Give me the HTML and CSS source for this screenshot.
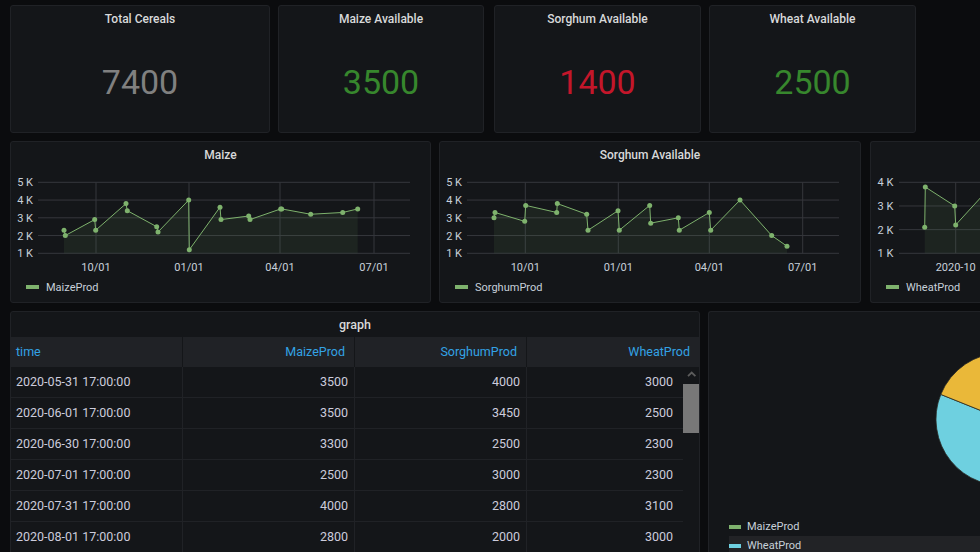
FILE: index.html
```html
<!DOCTYPE html>
<html>
<head>
<meta charset="utf-8">
<link rel="stylesheet" href="styles.css">
</head>
<body>
<div class="dash">
  <div class="row row-stats">
    <div class="panel stat w-total">
      <div class="panel-title">Total Cereals</div>
      <div class="stat-value c-gray">7400</div>
    </div>
    <div class="panel stat w-206">
      <div class="panel-title">Maize Available</div>
      <div class="stat-value c-green">3500</div>
    </div>
    <div class="panel stat w-207 extra-gap">
      <div class="panel-title">Sorghum Available</div>
      <div class="stat-value c-red">1400</div>
    </div>
    <div class="panel stat w-207">
      <div class="panel-title">Wheat Available</div>
      <div class="stat-value c-green">2500</div>
    </div>
  </div>

  <div class="row row-graphs">
    <div class="panel graph w-421">
      <div class="panel-title">Maize</div>
      <svg class="plot" width="419" height="100" viewBox="1 34 419 100">
        <path class="grid" d="M28 41.3H400M28 59.05H400M28 76.8H400M28 94.55H400M28 112.3H400M86 41.3V112.3M179 41.3V112.3M270 41.3V112.3M364 41.3V112.3"/>
        <g class="ylab">
          <text x="23" y="45.3">5 K</text>
          <text x="23" y="63">4 K</text>
          <text x="23" y="80.8">3 K</text>
          <text x="23" y="98.5">2 K</text>
          <text x="23" y="116.3">1 K</text>
        </g>
        <g class="xlab">
          <text x="86" y="130">10/01</text>
          <text x="179" y="130">01/01</text>
          <text x="270" y="130">04/01</text>
          <text x="364" y="130">07/01</text>
        </g>
        <polygon class="area" points="54,89.23 55.3,94.55 84.7,78.58 85.7,89.23 116,62.6 117.3,69.7 146.7,85.68 148,91 178.7,59.05 179.3,108.75 210,66.15 211,78.58 238.7,75.03 240,78.58 270.7,67.93 271.7,67.93 300.7,73.25 332.7,71.48 347.7,67.93 347.7,112.3 54,112.3"/>
        <polyline class="line" points="54,89.23 55.3,94.55 84.7,78.58 85.7,89.23 116,62.6 117.3,69.7 146.7,85.68 148,91 178.7,59.05 179.3,108.75 210,66.15 211,78.58 238.7,75.03 240,78.58 270.7,67.93 271.7,67.93 300.7,73.25 332.7,71.48 347.7,67.93"/>
        <g class="dots">
          <circle cx="54" cy="89.23" r="2.5"/><circle cx="55.3" cy="94.55" r="2.5"/>
          <circle cx="84.7" cy="78.58" r="2.5"/><circle cx="85.7" cy="89.23" r="2.5"/>
          <circle cx="116" cy="62.6" r="2.5"/><circle cx="117.3" cy="69.7" r="2.5"/>
          <circle cx="146.7" cy="85.68" r="2.5"/><circle cx="148" cy="91" r="2.5"/>
          <circle cx="178.7" cy="59.05" r="2.5"/><circle cx="179.3" cy="108.75" r="2.5"/>
          <circle cx="210" cy="66.15" r="2.5"/><circle cx="211" cy="78.58" r="2.5"/>
          <circle cx="238.7" cy="75.03" r="2.5"/><circle cx="240" cy="78.58" r="2.5"/>
          <circle cx="270.7" cy="67.93" r="2.5"/><circle cx="271.7" cy="67.93" r="2.5"/>
          <circle cx="300.7" cy="73.25" r="2.5"/><circle cx="332.7" cy="71.48" r="2.5"/>
          <circle cx="347.7" cy="67.93" r="2.5"/>
        </g>
      </svg>
      <div class="legend"><span class="swatch s-green"></span>MaizeProd</div>
    </div>

    <div class="panel graph w-422">
      <div class="panel-title">Sorghum Available</div>
      <svg class="plot" width="420" height="100" viewBox="1 34 420 100">
        <path class="grid" d="M28 41.3H400M28 59.05H400M28 76.8H400M28 94.55H400M28 112.3H400M86.3 41.3V112.3M179.3 41.3V112.3M270.3 41.3V112.3M363.7 41.3V112.3"/>
        <g class="ylab">
          <text x="23" y="45.3">5 K</text>
          <text x="23" y="63">4 K</text>
          <text x="23" y="80.8">3 K</text>
          <text x="23" y="98.5">2 K</text>
          <text x="23" y="116.3">1 K</text>
        </g>
        <g class="xlab">
          <text x="86.3" y="130">10/01</text>
          <text x="179.3" y="130">01/01</text>
          <text x="270.3" y="130">04/01</text>
          <text x="363.7" y="130">07/01</text>
        </g>
        <polygon class="area" points="55,76.8 56,71.48 85.7,80.35 86.7,64.38 117.7,71.48 118.3,62.6 147.7,73.25 149,89.23 179,69.7 180.3,89.23 210.7,64.38 211.7,82.13 239.3,76.8 240.3,89.23 270.3,71.48 271.7,89.23 301,59.05 332.7,94.55 348,105.2 348,112.3 55,112.3"/>
        <polyline class="line" points="55,76.8 56,71.48 85.7,80.35 86.7,64.38 117.7,71.48 118.3,62.6 147.7,73.25 149,89.23 179,69.7 180.3,89.23 210.7,64.38 211.7,82.13 239.3,76.8 240.3,89.23 270.3,71.48 271.7,89.23 301,59.05 332.7,94.55 348,105.2"/>
        <g class="dots">
          <circle cx="55" cy="76.8" r="2.5"/><circle cx="56" cy="71.48" r="2.5"/>
          <circle cx="85.7" cy="80.35" r="2.5"/><circle cx="86.7" cy="64.38" r="2.5"/>
          <circle cx="117.7" cy="71.48" r="2.5"/><circle cx="118.3" cy="62.6" r="2.5"/>
          <circle cx="147.7" cy="73.25" r="2.5"/><circle cx="149" cy="89.23" r="2.5"/>
          <circle cx="179" cy="69.7" r="2.5"/><circle cx="180.3" cy="89.23" r="2.5"/>
          <circle cx="210.7" cy="64.38" r="2.5"/><circle cx="211.7" cy="82.13" r="2.5"/>
          <circle cx="239.3" cy="76.8" r="2.5"/><circle cx="240.3" cy="89.23" r="2.5"/>
          <circle cx="270.3" cy="71.48" r="2.5"/><circle cx="271.7" cy="89.23" r="2.5"/>
          <circle cx="301" cy="59.05" r="2.5"/><circle cx="332.7" cy="94.55" r="2.5"/>
          <circle cx="348" cy="105.2" r="2.5"/>
        </g>
      </svg>
      <div class="legend"><span class="swatch s-green"></span>SorghumProd</div>
    </div>

    <div class="panel graph w-110 extra-gap1">
      <div class="panel-title"></div>
      <svg class="plot" width="110" height="100" viewBox="1 34 110 100">
        <path class="grid" d="M29 41.3H111M29 64.97H111M29 88.63H111M29 112.3H111M85.7 41.3V112.3"/>
        <g class="ylab">
          <text x="23.3" y="45.3">4 K</text>
          <text x="23.3" y="69">3 K</text>
          <text x="23.3" y="92.6">2 K</text>
          <text x="23.3" y="116.3">1 K</text>
        </g>
        <g class="xlab">
          <text x="85.7" y="130">2020-10</text>
        </g>
        <polygon class="area" points="54.7,86.26 55.3,46.02 84.7,64.97 85.7,83.9 116,50.76 116,112.3 54.7,112.3"/>
        <polyline class="line" points="54.7,86.26 55.3,46.02 84.7,64.97 85.7,83.9 116,50.76"/>
        <g class="dots">
          <circle cx="54.7" cy="86.26" r="2.5"/><circle cx="55.3" cy="46.02" r="2.5"/>
          <circle cx="84.7" cy="64.97" r="2.5"/><circle cx="85.7" cy="83.9" r="2.5"/>
        </g>
      </svg>
      <div class="legend"><span class="swatch s-green"></span>WheatProd</div>
    </div>
  </div>

  <div class="row row-bottom">
    <div class="panel table-panel w-690">
      <div class="table-title">graph</div>
      <div class="thead">
        <div class="th th-left">time</div>
        <div class="th">MaizeProd</div>
        <div class="th">SorghumProd</div>
        <div class="th th-last">WheatProd</div>
      </div>
      <div class="tbody">
        <div class="rows">
          <div class="tr"><div class="td td-left">2020-05-31 17:00:00</div><div class="td">3500</div><div class="td">4000</div><div class="td td-last">3000</div></div>
          <div class="tr"><div class="td td-left">2020-06-01 17:00:00</div><div class="td">3500</div><div class="td">3450</div><div class="td td-last">2500</div></div>
          <div class="tr"><div class="td td-left">2020-06-30 17:00:00</div><div class="td">3300</div><div class="td">2500</div><div class="td td-last">2300</div></div>
          <div class="tr"><div class="td td-left">2020-07-01 17:00:00</div><div class="td">2500</div><div class="td">3000</div><div class="td td-last">2300</div></div>
          <div class="tr"><div class="td td-left">2020-07-31 17:00:00</div><div class="td">4000</div><div class="td">2800</div><div class="td td-last">3100</div></div>
          <div class="tr"><div class="td td-left">2020-08-01 17:00:00</div><div class="td">2800</div><div class="td">2000</div><div class="td td-last">3000</div></div>
        </div>
        <div class="scrollbar">
          <svg class="chev" width="17" height="14" viewBox="0 0 17 14"><path d="M5 9.2L8.7 5.6L12.4 9.2"/></svg>
          <div class="thumb"></div>
        </div>
      </div>
    </div>

    <div class="panel pie-panel w-272">
      <svg class="pie" width="271" height="205" viewBox="0 0 271 205">
        <path fill="#7eb26d" d="M293.4 107.2L293.4 40.8A66.4 66.4 0 0 1 304.62 172.64Z"/>
        <path fill="#6ed0e0" d="M293.4 107.2L304.62 172.64A66.4 66.4 0 0 1 231.79 82.43Z"/>
        <path fill="#eab839" d="M293.4 107.2L231.79 82.43A66.4 66.4 0 0 1 293.4 40.8Z"/>
      </svg>
      <div class="pie-legend">
        <div class="pl-item"><span class="pl-swatch s-green"></span>MaizeProd</div>
        <div class="pl-item pl-hover"><span class="pl-swatch s-cyan"></span>WheatProd</div>
      </div>
    </div>
  </div>
</div>
</body>
</html>
```
FILE: styles.css
```css
* { box-sizing: border-box; }

body {
  margin: 0;
  width: 980px;
  height: 552px;
  overflow: hidden;
  background: #0b0c0e;
  font-family: Roboto, "Liberation Sans", sans-serif;
  color: #d8d9da;
}

.dash {
  display: flex;
  flex-direction: column;
  gap: 8px;
  padding: 5px 0 0 10px;
  width: 980px;
}

.row { display: flex; gap: 8px; flex: none; }
.row-stats { height: 128px; }
.row-graphs { height: 162px; }
.row-bottom { height: 260px; }

.panel {
  flex: none;
  display: flex;
  flex-direction: column;
  background: #141619;
  border: 1px solid #202226;
  border-radius: 3px;
  overflow: hidden;
}

.w-total { width: 260px; }
.w-206 { width: 206px; }
.w-207 { width: 207px; }
.w-421 { width: 421px; }
.w-422 { width: 422px; }
.w-110 { width: 110px; border-right: none; border-radius: 3px 0 0 3px; }
.w-690 { width: 690px; }
.w-272 { width: 272px; border-right: none; border-bottom: none; border-radius: 3px 0 0 0; }
.extra-gap { margin-left: 2px; }
.extra-gap1 { margin-left: 1px; }

.panel-title {
  flex: none;
  height: 21px;
  padding-top: 5px;
  line-height: 16px;
  font-size: 12px;
  font-weight: 500;
  text-align: center;
  color: #d8d9da;
}

.stat-value {
  flex: 1;
  display: flex;
  align-items: center;
  justify-content: center;
  padding-top: 5px;
  font-size: 34px;
  font-weight: 400;
}
.c-gray { color: #808080; }
.c-green { color: #37872d; }
.c-red { color: #c4162a; }

.plot { display: block; margin-top: 12px; flex: none; }
.grid { stroke: #35373c; stroke-width: 1; fill: none; }
.ylab text, .xlab text { font-family: Roboto, "Liberation Sans", sans-serif; font-size: 11px; fill: #c7d0d9; }
.ylab text { text-anchor: end; }
.xlab text { text-anchor: middle; }
.area { fill: rgba(126, 178, 109, 0.09); stroke: none; }
.line { fill: none; stroke: #7eb26d; stroke-width: 1; stroke-linejoin: round; }
.dots circle { fill: #7eb26d; }

.legend {
  flex: none;
  margin-top: 4px;
  height: 16px;
  display: flex;
  align-items: center;
  padding-left: 15px;
  font-size: 11px;
  color: #c7d0d9;
  white-space: nowrap;
}
.swatch { width: 13px; height: 4px; margin-right: 7px; flex: none; }
.s-green { background: #7eb26d; }
.s-cyan { background: #6ed0e0; }

.table-title {
  flex: none;
  height: 25px;
  padding-top: 5px;
  line-height: 16px;
  font-size: 12.5px;
  font-weight: 500;
  text-align: center;
  color: #d8d9da;
}

.thead {
  flex: none;
  display: grid;
  grid-template-columns: repeat(4, 172px);
  height: 30px;
  background: #202226;
}
.th {
  color: #33a2e5;
  font-size: 12.5px;
  line-height: 30px;
  padding: 0 9px 0 5px;
  text-align: right;
  border-right: 1px solid #141619;
}
.th-left { text-align: left; }
.th-last { border-right: none; }

.tbody { display: flex; flex: none; }
.rows { width: 672px; }
.tr {
  display: grid;
  grid-template-columns: 172px 172px 172px 156px;
  height: 31px;
  border-bottom: 1px solid #202226;
}
.td {
  font-size: 12.5px;
  line-height: 30px;
  text-align: right;
  padding: 0 6px 0 5px;
  border-right: 1px solid #202226;
  color: #ccccdc;
}
.td-left { text-align: left; }
.td-last { border-right: none; padding-right: 10px; }

.scrollbar { width: 17px; flex: none; }
.chev { display: block; }
.chev path { fill: none; stroke: #5c5c5c; stroke-width: 1.8; }
.thumb { margin-top: 3px; height: 49px; background: #787878; }

.pie { display: block; flex: none; }
.pie path { stroke: #2a2a24; stroke-width: 0.8; }
.pie-legend { display: flex; flex-direction: column; flex: none; }
.pl-item {
  height: 19px;
  margin-left: 20px;
  display: flex;
  align-items: center;
  font-size: 11px;
  color: #c7d0d9;
}
.pl-hover { background: #222326; }
.pl-swatch { width: 12px; height: 4px; margin-right: 6px; flex: none; }
```
